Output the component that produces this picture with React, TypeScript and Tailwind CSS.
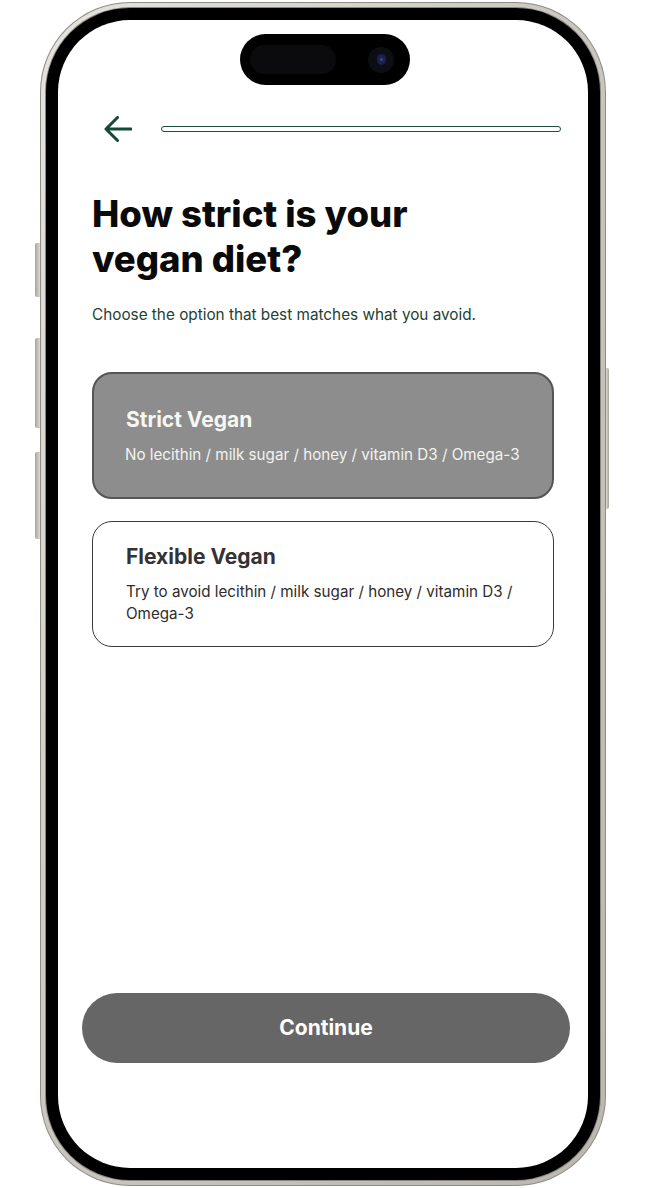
const font = { fontFamily: "Inter, 'Noto Sans', sans-serif" };

function BackArrow() {
  return (
    <svg width="28" height="26" viewBox="0 0 28 26" fill="none">
      <path
        d="M2 13 L13.5 1.5 M2 13 L13.5 24.5 M2 13 H27"
        stroke="#124a35"
        strokeWidth="3"
        strokeLinecap="round"
        strokeLinejoin="round"
      />
    </svg>
  );
}

function DynamicIsland() {
  return (
    <div className="absolute top-[14px] left-[182px] w-[170px] h-[51px] rounded-full bg-black flex items-center pl-[10px] pr-[16px] justify-between">
      <div className="w-[86px] h-[29px] rounded-full bg-[#0b0b0d]" />
      <div className="w-[26px] h-[26px] rounded-full bg-[#0d0d14] flex items-center justify-center">
        <div className="w-[9px] h-[11px] rounded-full bg-[#1c1f4a] flex items-center justify-center">
          <div className="w-[3px] h-[3px] rounded-full bg-[#3a4a8a]" />
        </div>
      </div>
    </div>
  );
}

interface OptionProps {
  title: string;
  desc: string;
  selected?: boolean;
}

function OptionCard({ title, desc, selected }: OptionProps) {
  return (
    <div
      className={
        selected
          ? "h-[127px] rounded-[20px] border-2 border-[#555555] bg-[#8d8d8d] pl-[31px] pr-[30px] flex flex-col justify-center"
          : "h-[126px] rounded-[20px] border border-[#3a3a3a] bg-white pl-[33px] pr-[30px] flex flex-col justify-center"
      }
    >
      <div className={selected ? "pl-[1px] text-[21px] leading-[28px] font-bold text-[#f7f7f2]" : "text-[21px] leading-[28px] font-bold text-[#343232]"}>
        {title}
      </div>
      <div className={selected ? "mt-[10px] text-[15.2px] leading-[22px] text-[#f3f3ef]" : "mt-[10px] text-[15.2px] leading-[22px] text-[#2e2c2c]"}>
        {desc}
      </div>
    </div>
  );
}

export default function App() {
  return (
    <div className="w-[649px] h-[1188px] bg-white pl-[40px] pt-[2px]" style={font}>
      <div className="relative w-[566px] h-[1184px] rounded-[90px] p-[1px] bg-[#8f8c86]">
        {/* side buttons */}
        <div className="absolute left-[-5px] top-[241px] w-[5px] h-[54px] rounded-l-[2px] bg-gradient-to-r from-[#a7a49d] to-[#dcdad4]" />
        <div className="absolute left-[-5px] top-[336px] w-[5px] h-[90px] rounded-l-[2px] bg-gradient-to-r from-[#a7a49d] to-[#dcdad4]" />
        <div className="absolute left-[-5px] top-[450px] w-[5px] h-[87px] rounded-l-[2px] bg-gradient-to-r from-[#a7a49d] to-[#dcdad4]" />
        <div className="absolute right-[-3px] top-[366px] w-[3px] h-[141px] rounded-r-[2px] bg-gradient-to-l from-[#a7a49d] to-[#dcdad4]" />

        <div className="h-full rounded-[89px] p-[4px] bg-gradient-to-br from-[#e6e4df] via-[#c9c6bf] to-[#bab7b0]">
          <div className="h-full rounded-[85px] p-[1px] bg-[#8a8781]">
            <div className="h-full rounded-[84px] bg-black p-[12px]">
              <div className="relative h-full rounded-[72px] bg-white overflow-hidden flex flex-col">
                <DynamicIsland />

                <div className="pt-[96px] pl-[46px] pr-[27px] flex items-center gap-[29px]">
                  <BackArrow />
                  <div className="flex-1 h-[6px] rounded-full border-[1.5px] border-[#1d4d3a] bg-white" />
                </div>

                <div className="px-[34px]">
                  <h1 className="mt-[50px] text-[36.5px] leading-[45px] font-extrabold text-[#0a0a0a]">
                    How strict is your
                    <br />
                    vegan diet?
                  </h1>
                  <p className="mt-[21px] text-[15.3px] leading-[24px] text-[#1c4233]">
                    Choose the option that best matches what you avoid.
                  </p>

                  <div className="mt-[45px] flex flex-col gap-[22px]">
                    <OptionCard
                      selected
                      title="Strict Vegan"
                      desc="No lecithin / milk sugar / honey / vitamin D3 / Omega-3"
                    />
                    <OptionCard
                      title="Flexible Vegan"
                      desc="Try to avoid lecithin / milk sugar / honey / vitamin D3 / Omega-3"
                    />
                  </div>
                </div>

                <div className="flex-1" />

                <button className="ml-[24px] mr-[18px] mb-[105px] h-[70px] rounded-full bg-[#666666] text-white text-[21px] font-bold">
                  Continue
                </button>
              </div>
            </div>
          </div>
        </div>
      </div>
    </div>
  );
}
